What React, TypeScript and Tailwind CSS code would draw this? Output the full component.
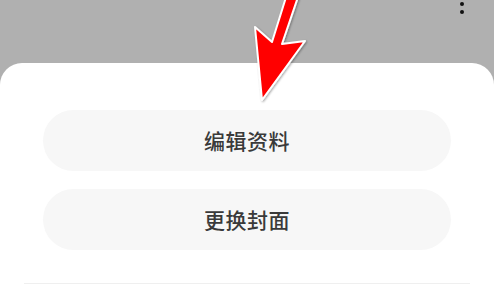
const font = { fontFamily: '"Noto Sans CJK SC", "Noto Sans", sans-serif' };

const SheetButton = ({ label }: { label: string }) => (
  <button className="h-[61px] w-full rounded-full bg-[#f7f7f7] text-[21px] font-medium text-[#3a3a3a] tracking-[0.5px]">
    {label}
  </button>
);

const App = () => {
  return (
    <div className="relative h-[291px] w-[494px] overflow-hidden bg-[#b0b0b0] flex flex-col" style={font}>
      {/* Top bar with menu dots */}
      <div className="h-[63px] shrink-0 flex justify-end pr-[30px]">
        <div className="flex flex-col gap-[4px] pt-[2px]">
          <span className="block h-[4px] w-[4px] rounded-full bg-[#111]" />
          <span className="block h-[4px] w-[4px] rounded-full bg-[#111]" />
        </div>
      </div>

      {/* Bottom sheet */}
      <div className="flex-1 bg-white rounded-t-[22px] pt-[47px]">
        <div className="flex flex-col gap-[18px] px-[43px]">
          <SheetButton label="编辑资料" />
          <SheetButton label="更换封面" />
        </div>
        <div className="mx-[24px] mt-[33px] h-px bg-[#efefef]" />
      </div>

      {/* Red arrow annotation */}
      <svg className="absolute left-0 top-0 pointer-events-none" width="494" height="291" viewBox="0 0 494 291">
        <defs>
          <filter id="sh" x="-20%" y="-20%" width="140%" height="140%">
            <feDropShadow dx="1" dy="1" stdDeviation="1" floodColor="#000" floodOpacity="0.35" />
          </filter>
        </defs>
        <polygon
          points="287,-6 299,-6 282,44 305,41 262,100 255,27 272,42"
          fill="#ff0000"
          stroke="#ffffff"
          strokeWidth="2"
          strokeLinejoin="round"
          filter="url(#sh)"
        />
      </svg>
    </div>
  );
};

export default App;
